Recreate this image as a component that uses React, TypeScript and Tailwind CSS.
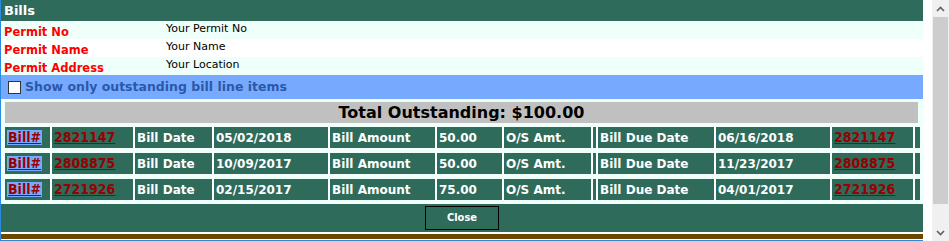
import React from "react";

type Bill = { no: string; date: string; amount: string; due: string };

const bills: Bill[] = [
  { no: "2821147", date: "05/02/2018", amount: "50.00", due: "06/16/2018" },
  { no: "2808875", date: "10/09/2017", amount: "50.00", due: "11/23/2017" },
  { no: "2721926", date: "02/15/2017", amount: "75.00", due: "04/01/2017" },
];

const cell = "bg-[#2f6b5b] flex items-center pl-[2px] text-[12px] font-bold text-white whitespace-nowrap";
const link =
  "font-['DejaVu_Sans_Condensed','DejaVu_Sans',sans-serif] text-[14px] font-bold text-[#990000] underline leading-[15px]";

const BillRow: React.FC<{ bill: Bill }> = ({ bill }) => (
  <div className="flex h-[21px] gap-[2px] bg-white w-fit">
    <div className={`${cell} w-[45px]`}>
      <a className={`${link} bg-[#77aaff] px-[1px]`}>Bill#</a>
    </div>
    <div className={`${cell} w-[81px]`}>
      <a className={link}>{bill.no}</a>
    </div>
    <div className={`${cell} w-[77px]`}>Bill Date</div>
    <div className={`${cell} w-[114px]`}>{bill.date}</div>
    <div className={`${cell} w-[105px]`}>Bill Amount</div>
    <div className={`${cell} w-[65px]`}>{bill.amount}</div>
    <div className={`${cell} w-[87px]`}>O/S Amt.</div>
    <div className={`${cell} w-[3px] pl-0`} />
    <div className={`${cell} w-[116px]`}>Bill Due Date</div>
    <div className={`${cell} w-[114px]`}>{bill.due}</div>
    <div className={`${cell} w-[81px]`}>
      <a className={link}>{bill.no}</a>
    </div>
    <div className={`${cell} w-[5px] pl-0`} />
  </div>
);

const InfoRow: React.FC<{ label: string; value: string; shade?: boolean }> = ({ label, value, shade }) => (
  <div className={`flex h-[18px] ${shade ? "bg-[#effffa]" : "bg-white"}`}>
    <div className="w-[165px] pl-[3px] pt-[4px] text-[11.5px] leading-[14px] font-bold text-[#ff0000]">{label}</div>
    <div className="pt-[1px] text-[11px] leading-[13px] text-black">{value}</div>
  </div>
);

export default function App() {
  return (
    <div className="flex w-[949px] h-[241px] bg-white font-['DejaVu_Sans',sans-serif]">
      {/* dialog body */}
      <div className="flex flex-col w-[923px] border-l border-b border-[#2b8ae0]">
        <div className="h-[21px] bg-[#2f6b5b] pl-[3px] flex items-center text-[13px] font-bold text-white">
          Bills
        </div>
        <InfoRow label="Permit No" value="Your Permit No" shade />
        <InfoRow label="Permit Name" value="Your Name" />
        <InfoRow label="Permit Address" value="Your Location" shade />

        <div className="h-[24px] bg-[#77aaff] flex items-center pl-[7px] gap-[4px]">
          <span className="w-[13px] h-[13px] bg-white border border-[#333] shrink-0" />
          <span className="text-[12.5px] font-bold text-[#2b58a8]">Show only outstanding bill line items</span>
        </div>

        <div className="bg-[#effffa] pt-[3px] pb-[4px] pl-[4px] flex flex-col">
          <div className="w-[913px] h-[21px] bg-[#c0c0c0] flex items-center justify-center text-[16px] font-bold text-black">
            Total Outstanding: $100.00
          </div>
          <div className="flex flex-col gap-[5px] mt-[4px]">
            {bills.map((b) => (
              <BillRow key={b.no} bill={b} />
            ))}
          </div>
        </div>

        <div className="h-[28px] bg-[#2f6b5b] flex items-center justify-center">
          <button className="w-[74px] h-[24px] border border-black bg-[#2f6b5b] text-white text-[11px] font-bold font-['DejaVu_Sans_Condensed','DejaVu_Sans',sans-serif]">
            Close
          </button>
        </div>
        <div className="h-[2px] bg-white" />
        <div className="h-[5px] bg-[#6b4700]" />
      </div>

      <div className="w-[9px]" />

      {/* scrollbar */}
      <div className="w-[17px] h-full bg-[#f0f0f0] flex flex-col">
        <div className="h-[17px] flex items-center justify-center">
          <svg width="9" height="6" viewBox="0 0 9 6">
            <path d="M1 5 L4.5 1.5 L8 5" fill="none" stroke="#606060" strokeWidth="1.6" />
          </svg>
        </div>
        <div className="mx-[1px] h-[187px] bg-[#cdcdcd]" />
        <div className="flex-1" />
        <div className="h-[17px] flex items-center justify-center">
          <svg width="9" height="6" viewBox="0 0 9 6">
            <path d="M1 1 L4.5 4.5 L8 1" fill="none" stroke="#606060" strokeWidth="1.6" />
          </svg>
        </div>
      </div>
    </div>
  );
}
